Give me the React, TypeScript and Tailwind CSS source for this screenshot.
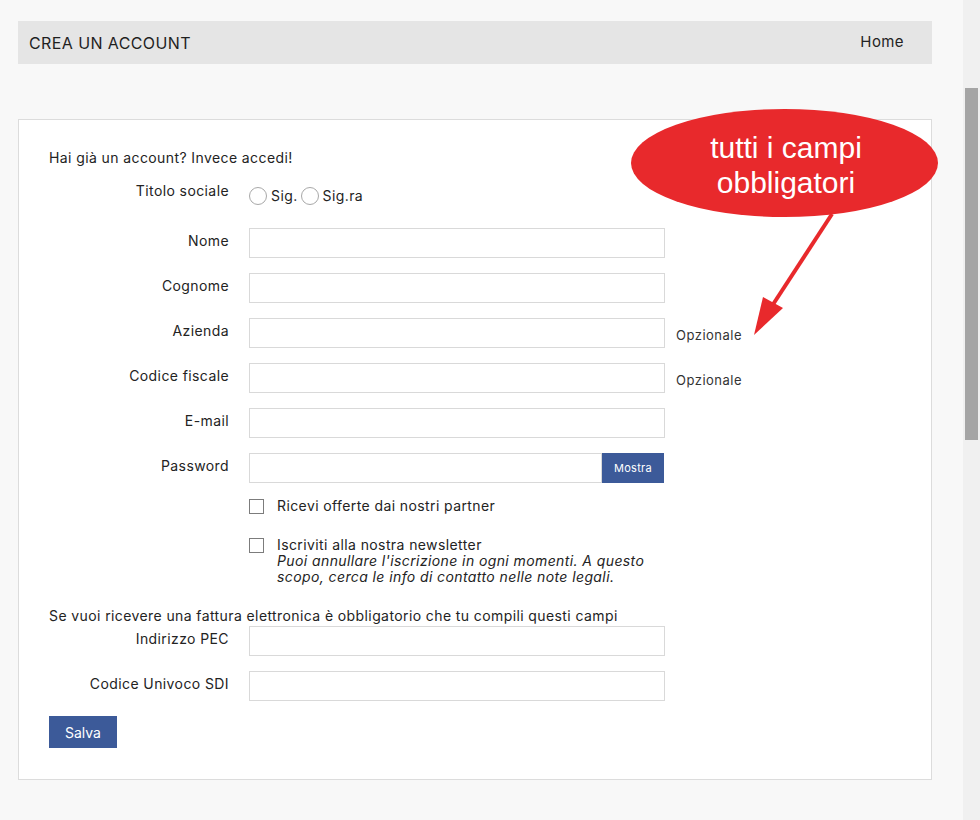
import React from 'react';

const font = { fontFamily: 'Inter, "Noto Sans", sans-serif' };

interface RowProps {
  label: string;
  children: React.ReactNode;
  className?: string;
}

const FormRow = ({ label, children, className = '' }: RowProps) => (
  <div className={`flex items-start ${className}`}>
    <label className="w-[180px] shrink-0 pt-[3px] text-right text-[14px] leading-[20px] tracking-[0.4px] text-[#232323]">
      {label}
    </label>
    <div className="ml-[20px] flex items-center">{children}</div>
  </div>
);

const TextInput = ({ width = 'w-[416px]' }: { width?: string }) => (
  <input
    type="text"
    className={`h-[30px] ${width} border border-[#d9d9d9] bg-white px-2 text-[14px] outline-none`}
  />
);

const Optional = () => (
  <span className="ml-[11px] pt-[5px] text-[13px] tracking-[0.5px] text-[#333]">Opzionale</span>
);

const Radio = ({ label }: { label: string }) => (
  <span className="flex items-center">
    <span className="h-[18px] w-[18px] rounded-full border border-[#a8a8a8] bg-white" />
    <span className="ml-[4px] text-[14px] leading-[18px] tracking-[0.4px] text-[#232323]">
      {label}
    </span>
  </span>
);

const Checkbox = () => (
  <span className="mt-[1px] h-[15px] w-[15px] shrink-0 border border-[#7c7c7c] bg-white" />
);

const Callout = () => (
  <svg
    className="pointer-events-none absolute left-0 top-0"
    width="963"
    height="400"
    viewBox="0 0 963 400"
  >
    <ellipse cx="784.5" cy="163" rx="153.5" ry="54" fill="#e8292c" />
    <text
      x="786"
      y="158"
      textAnchor="middle"
      fill="#ffffff"
      fontSize="30"
      fontFamily='"Liberation Sans", Arial, sans-serif'
    >
      tutti i campi
    </text>
    <text
      x="786"
      y="193"
      textAnchor="middle"
      fill="#ffffff"
      fontSize="30"
      fontFamily='"Liberation Sans", Arial, sans-serif'
    >
      obbligatori
    </text>
    <line x1="832" y1="214" x2="772" y2="306" stroke="#e8292c" strokeWidth="4" />
    <polygon points="754,335 763,297 783,308" fill="#e8292c" />
  </svg>
);

const App = () => {
  return (
    <div className="flex min-h-[820px] bg-[#f8f8f8]" style={font}>
      <div className="relative w-[963px] shrink-0 pb-[40px] pl-[18px] pr-[31px] pt-[21px]">
        <div className="flex h-[43px] items-center justify-between bg-[#e5e5e5] pl-[11px] pr-[28px]">
          <span className="text-[16px] uppercase tracking-[0.4px] text-[#1f1f1f]">
            Crea un account
          </span>
          <span className="text-[15px] tracking-[0.4px] text-[#232323]">Home</span>
        </div>

        <div className="mt-[55px] border border-[#dcdcdc] bg-white pb-[31px] pl-[30px] pt-[28px] tracking-[0.4px]">
          <p className="text-[14px] leading-[20px] text-[#232323]">
            Hai già un account? <a className="text-[#232323]">Invece accedi!</a>
          </p>

          <div className="mt-[13px] flex items-start">
            <span className="w-[180px] shrink-0 text-right text-[14px] leading-[20px] text-[#232323]">
              Titolo sociale
            </span>
            <div className="ml-[20px] mt-[6px] flex items-center gap-[3px]">
              <Radio label="Sig." />
              <Radio label="Sig.ra" />
            </div>
          </div>

          <FormRow label="Nome" className="mt-[23px]">
            <TextInput />
          </FormRow>
          <FormRow label="Cognome" className="mt-[15px]">
            <TextInput />
          </FormRow>
          <FormRow label="Azienda" className="mt-[15px]">
            <TextInput />
            <Optional />
          </FormRow>
          <FormRow label="Codice fiscale" className="mt-[15px]">
            <TextInput />
            <Optional />
          </FormRow>
          <FormRow label="E-mail" className="mt-[15px]">
            <TextInput />
          </FormRow>
          <FormRow label="Password" className="mt-[15px]">
            <TextInput width="w-[353px]" />
            <button className="h-[30px] w-[62px] bg-[#3c5a99] text-[11px] tracking-[0.3px] text-white">
              Mostra
            </button>
          </FormRow>

          <div className="ml-[200px] mt-[15px] flex items-start">
            <Checkbox />
            <span className="ml-[13px] text-[14px] leading-[16px] text-[#232323]">
              Ricevi offerte dai nostri partner
            </span>
          </div>

          <div className="ml-[200px] mt-[23px] flex items-start">
            <Checkbox />
            <div className="ml-[13px] text-[14px] leading-[16px] text-[#232323]">
              <div>Iscriviti alla nostra newsletter</div>
              <div className="italic">
                Puoi annullare l'iscrizione in ogni momenti. A questo
                <br />
                scopo, cerca le info di contatto nelle note legali.
              </div>
            </div>
          </div>

          <p className="mt-[21px] text-[14px] leading-[20px] text-[#232323]">
            Se vuoi ricevere una fattura elettronica è obbligatorio che tu compili questi campi
          </p>

          <FormRow label="Indirizzo PEC">
            <TextInput />
          </FormRow>
          <FormRow label="Codice Univoco SDI" className="mt-[15px]">
            <TextInput />
          </FormRow>

          <button className="mt-[15px] h-[32px] w-[68px] bg-[#3c5a99] text-[14px] tracking-normal text-white">
            Salva
          </button>
        </div>

        <Callout />
      </div>

      <div className="w-[17px] shrink-0 bg-[#f0f0f0] pt-[88px]">
        <div className="mx-[2px] h-[352px] bg-[#a5a5a5]" />
      </div>
    </div>
  );
};

export default App;
